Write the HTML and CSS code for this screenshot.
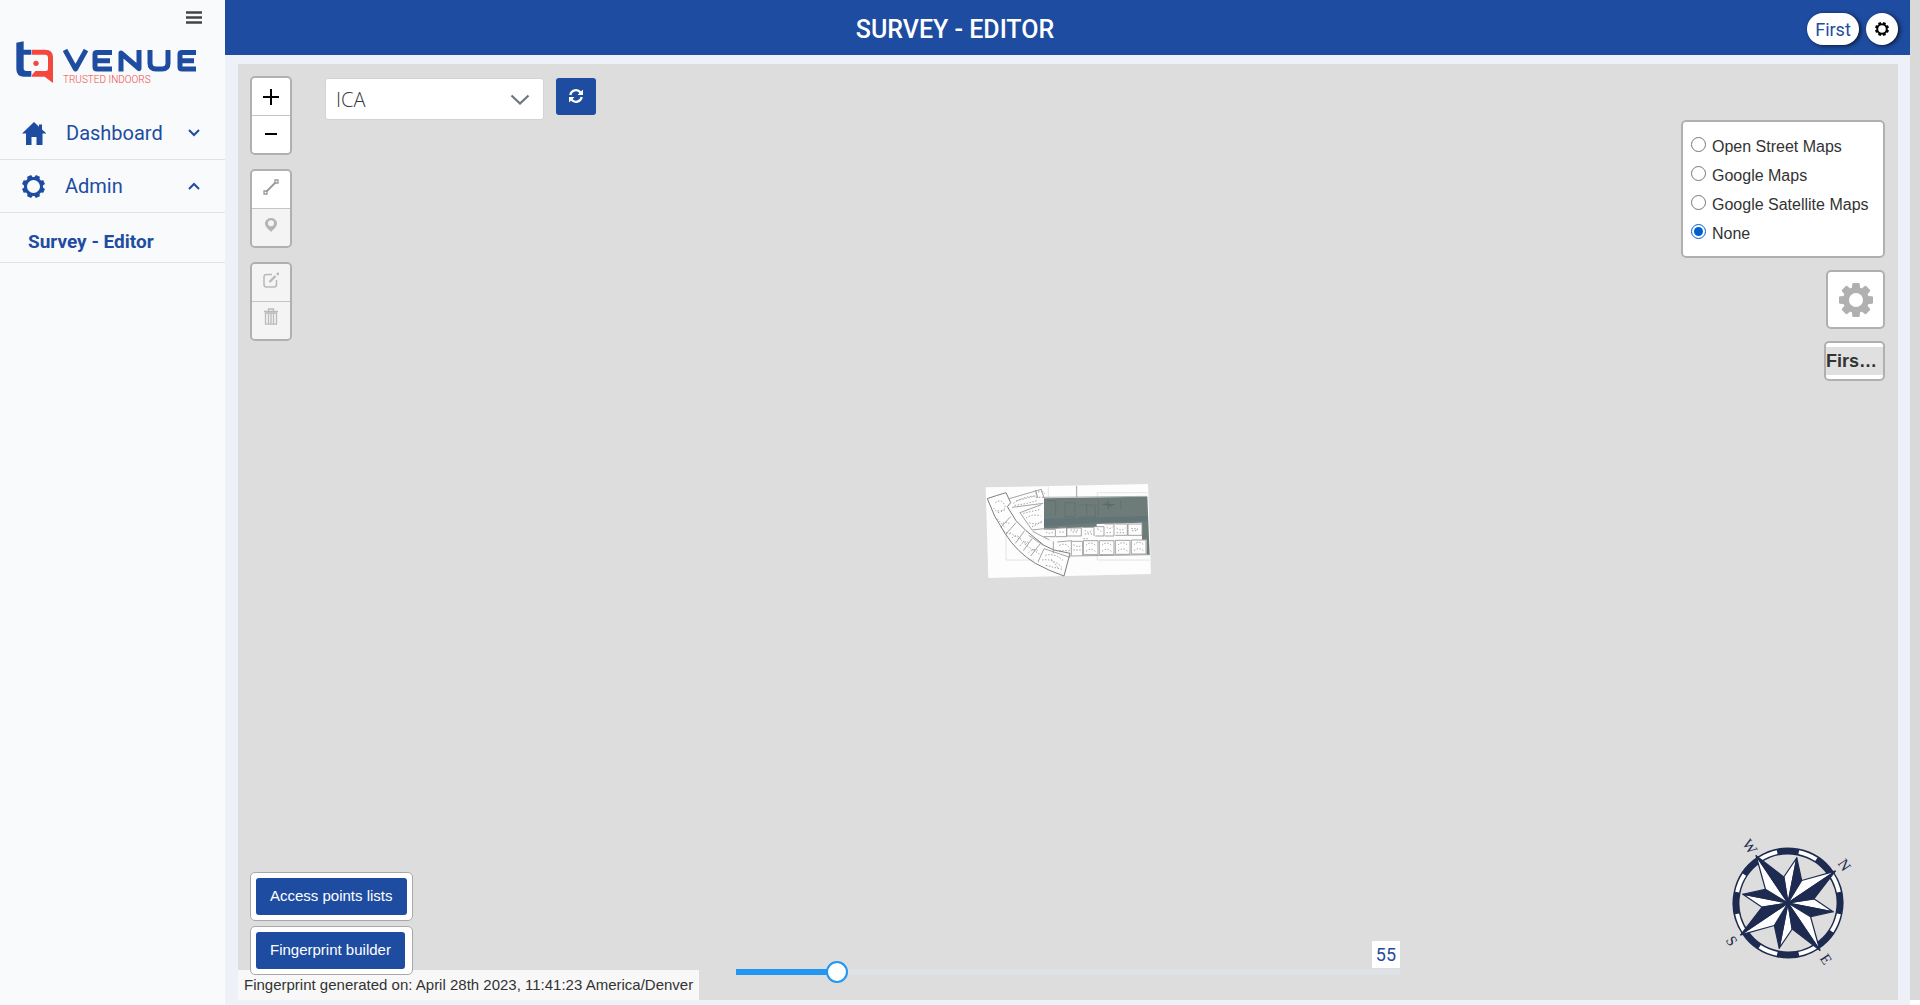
FILE: index.html
```html
<!DOCTYPE html>
<html lang="en">
<head>
<meta charset="utf-8">
<title>Survey - Editor</title>
<link rel="stylesheet" href="styles.css">
</head>
<body>
<div class="app">
  <header class="topbar">
    <h1 class="topbar-title">SURVEY - EDITOR</h1>
    <div class="topbar-actions">
      <button class="pill" type="button">First</button>
      <button class="round" type="button" aria-label="Settings">
        <svg width="14" height="14" viewBox="-12 -12 24 24"><g fill="#000"><path fill-rule="evenodd" d="M0-9a9 9 0 1 0 0 18a9 9 0 1 0 0-18zM0-6.500a6.500 6.500 0 1 1 0 13a6.500 6.500 0 1 1 0-13z"/><path id="tooth" d="M-2.200-12h4.400l1.200 4.500h-6.800z" transform="rotate(22.5)"/><use href="#tooth" transform="rotate(45)"/><use href="#tooth" transform="rotate(90)"/><use href="#tooth" transform="rotate(135)"/><use href="#tooth" transform="rotate(180)"/><use href="#tooth" transform="rotate(225)"/><use href="#tooth" transform="rotate(270)"/><use href="#tooth" transform="rotate(315)"/></g></svg>
      </button>
    </div>
  </header>

  <nav class="sidebar">
    <button class="menu-toggle" type="button" aria-label="Toggle menu">
      <svg width="16" height="14" viewBox="0 0 16 14"><path d="M0 1.5h16M0 6.5h16M0 11.5h16" stroke="#444" stroke-width="2.6"/></svg>
    </button>
    <div class="brand">
      <svg width="38" height="42" viewBox="0 0 114 126" aria-hidden="true">
        <path fill="#1e4ca1" d="M1 5L23 1V26H46V41H23V82Q23 90 31 90H46V107H24Q1 107 1 84z"/>
        <path fill="#f4483f" d="M48 26H88Q111 26 111 49V126L86 107H48V102L58 90H90Q96 90 96 84V50Q96 41 87 41H48z"/>
        <circle cx="60" cy="67" r="8" fill="#f4483f"/>
      </svg>
      <div class="brand-text">
        <svg width="134" height="24" viewBox="0 0 134 24" role="img" aria-label="VENUE"><g fill="none" stroke="#1e4ca1" stroke-width="5" stroke-linejoin="round"><path d="M2 1L12.500 20L23 1"/><path d="M49 3.500H34Q32 3.500 32 5V18Q32 20 34 20H49M32 11.800H47"/><path d="M58 22.500V4L76 19.500V1"/><path d="M87 1V14Q87 20 93 20H99Q105 20 105 14V1"/><path d="M133 3.500H119Q117 3.500 117 5V18Q117 20 119 20H133M117 11.800H131"/></g></svg>
        <span class="tagline">TRUSTED INDOORS</span>
      </div>
    </div>
    <ul class="menu">
      <li><a class="menu-item" href="#">
        <svg width="24" height="24" viewBox="0 0 24 24"><path fill="#1e4ca1" d="M12 1L0 12.500H4V24H9.500V16H14.500V24H20.500V12.500H24.500L20 8.500V3.500H17V5.700z"/></svg>
        <span>Dashboard</span>
        <svg class="caret" width="12" height="8" viewBox="0 0 12 8"><path d="M1 1l5 5 5-5" fill="none" stroke="#1e4ca1" stroke-width="2"/></svg>
      </a></li>
      <li><a class="menu-item" href="#">
        <svg width="23" height="23" viewBox="-12 -12 24 24"><g fill="#1e4ca1"><path fill-rule="evenodd" d="M0-10a10 10 0 1 0 0 20a10 10 0 1 0 0-20zM0-6.800a6.800 6.800 0 1 1 0 13.600a6.800 6.800 0 1 1 0-13.600z"/><use href="#tooth"/><use href="#tooth" transform="rotate(45)"/><use href="#tooth" transform="rotate(90)"/><use href="#tooth" transform="rotate(135)"/><use href="#tooth" transform="rotate(180)"/><use href="#tooth" transform="rotate(225)"/><use href="#tooth" transform="rotate(270)"/><use href="#tooth" transform="rotate(315)"/></g></svg>
        <span>Admin</span>
        <svg class="caret" width="12" height="8" viewBox="0 0 12 8"><path d="M1 7l5-5 5 5" fill="none" stroke="#1e4ca1" stroke-width="2"/></svg>
      </a></li>
      <li><a class="submenu-item" href="#">Survey - Editor</a></li>
    </ul>
  </nav>

  <main class="map">
    <svg class="floorplan" width="200" height="120" viewBox="-6 6 600 360" aria-hidden="true">
      <path d="M47 52L534 42L543 312L55 324z" fill="#fdfdfd"/>
      <g fill="none" stroke="#dadada" stroke-width="2"><path d="M108 190V270H195M382 80V68H532M382 256V270H540M235 50V80"/></g>
      <path d="M222 85L532 80L539 254H530V209H516V158L466 160L380 162V170L252 176H222z" fill="#6d7c79"/>
      <path d="M222 146L532 138V152L380 158L222 170z" fill="#5f7078" opacity=".7"/>
      <g fill="none" stroke="#5b6866" stroke-width="1.500"><path d="M232 92h25v45M285 98h30v42h-30zM326 105h50v36h-50M350 100v38M385 88v50M452 92v26M222 82L532 79"/><path d="M398 104h36M415 92v26M404 98l22 12" stroke-width="3"/></g>
      <g fill="none" stroke="#969696" stroke-width="2.600">
        <path d="M52 86Q80 76 108 68L122 98L112 110L138 152L168 182L222 226L252 240L300 250L282 318Q240 304 196 280Q140 246 105 190Q70 140 52 86z" stroke="#7d7d7d" stroke-width="3"/>
        <path d="M118 86L214 58M126 112L220 100M150 128L186 180L222 176M150 128L214 104M214 58L222 84M196 60L204 84M92 172L122 140M108 192L138 158M136 220L164 182M160 242L186 206M182 258L210 222M204 276L222 236L300 262M188 184l50 26M176 196l44 30"/>
        <path d="M222 178H256V200H222M266 172H290V200H258M290 174H334V198H290zM338 172H372V198M376 170H402V198H376M404 162H432V198H404M436 162H472V196H436M474 162H516V196H474z"/>
        <path d="M250 214V250M262 216L304 212V256M304 214H338V256M340 212H384V254H340zM388 212H432V254H388zM436 211H480V253H436zM484 210H528V252H484zM300 258L540 254M320 48V82"/>
      </g>
      <g fill="none" stroke="#8c8c8c" stroke-width="2.600" stroke-dasharray="4 5">
        <path d="M76 98q16-12 26 4t-10 20-20-8M84 128l24-10M130 100q30-22 70-22M134 106q34-4 66-14M140 92l56-14M160 130L212 118M168 144q20-14 44-6M178 158q20 8 38-4M186 170l30-14M82 146l24 28M98 160q14-8 22 4M100 184l20 8M120 188l22 14M126 204q14-14 26 2M144 204l30 20M150 228q10-18 28-10M164 222l30 22M176 248q14-16 28-6M190 240l18 12M226 256q30-8 54 16M216 270q30-6 60 22M228 286l48 12M244 268l20 26"/>
        <path d="M196 70q20-12 30 4M198 82h24M228 186q10 8 24-2M268 186h18M302 180h20v6h-20M344 180q10 12 22 2M344 192h22M382 176q10 8 14 10M410 172q10 8 18-2M410 188h18M440 174q14 12 26 0M440 188h26M484 176h18v6h-18M268 226q20-10 32 10M268 242h32M310 224q14 10 26 2M310 240h24M348 226q14-14 28 0M348 244q14-12 28 0M396 226q14-14 28 0M396 244q14-12 28 0M444 225q14-14 28 0M444 243q14-12 28 0M492 224q14-14 28 0M492 242q14-12 28 0M340 206h14"/>
      </g>
    </svg>

    <div class="map-top">
      <div class="tools">
        <div class="tool-group">
          <button class="tool" type="button" aria-label="Zoom in"><svg width="16" height="16" viewBox="0 0 16 16"><path d="M0 8h16M8 0v16" stroke="#000" stroke-width="2"/></svg></button>
          <button class="tool" type="button" aria-label="Zoom out"><svg width="16" height="16" viewBox="0 0 16 16"><path d="M2 7h12" stroke="#000" stroke-width="2"/></svg></button>
        </div>
        <div class="tool-group draw">
          <button class="tool" type="button" aria-label="Draw line"><svg width="16" height="16" viewBox="0 0 16 16"><g fill="none" stroke="#999"><path d="M3.500 12.500L12.500 3.500" stroke-width="1.800"/><path d="M1 12h3v3h-3zM12 1h3v3h-3z" stroke-width="1.300"/></g></svg></button>
          <button class="tool" type="button" aria-label="Draw marker" disabled><svg width="14" height="16" viewBox="0 0 14 16"><path fill="#b4b4b4" fill-rule="evenodd" d="M7 1C3.500 1 1 3.500 1 6.500C1 10 5 12.500 7 15C9 12.500 13 10 13 6.500C13 3.500 10.500 1 7 1zM7 3.200a3 3 0 1 1 0 6a3 3 0 1 1 0-6z"/></svg></button>
        </div>
        <div class="tool-group draw">
          <button class="tool" type="button" aria-label="Edit layers" disabled><svg width="16" height="16" viewBox="0 0 16 16"><g fill="none" stroke="#b9b9b9" stroke-width="1.500"><path d="M9 2.500H3.500Q1 2.500 1 5V12.500Q1 15 3.500 15H11Q13.500 15 13.500 12.500V8"/><path d="M6.500 10L12.500 4" stroke-width="2.400"/><path d="M14 1l1.800 1.800" stroke-width="2.500"/></g></svg></button>
          <button class="tool" type="button" aria-label="Delete layers" disabled><svg width="14" height="20" viewBox="0 0 14 20"><g fill="none" stroke="#b9b9b9"><path d="M0 3.500H14M4.500 3V1H9.500V3" stroke-width="1.300"/><path d="M1.500 5V16.200H12.500V5zM4.500 5.500V16M7 5.500V16M9.500 5.500V16" stroke-width="1.300"/></g></svg></button>
        </div>
      </div>
      <div class="floor-picker">
        <span class="select-wrap">
          <select class="select" aria-label="Venue"><option>ICA</option></select>
          <svg class="select-arrow" width="20" height="12" viewBox="0 0 20 12"><path d="M1.500 1.500L10 9.500L18.500 1.500" fill="none" stroke="#6c757d" stroke-width="2.200"/></svg>
        </span>
        <button class="refresh" type="button" aria-label="Refresh"><svg width="14" height="14" viewBox="0 0 14 14"><g fill="none" stroke="#fff" stroke-width="2.200"><path d="M1.300 6A5.700 5.700 0 0 1 11.500 3.500M12.700 8A5.700 5.700 0 0 1 2.500 10.500"/></g><path fill="#fff" d="M14 .5V6H8.500zM0 13.500V8H5.500z"/></svg></button>
      </div>
      <div class="map-side">
        <fieldset class="layers">
          <label><input type="radio" name="layer">Open Street Maps</label>
          <label><input type="radio" name="layer">Google Maps</label>
          <label><input type="radio" name="layer">Google Satellite Maps</label>
          <label><input type="radio" name="layer" checked>None</label>
        </fieldset>
        <button class="map-settings" type="button" aria-label="Map settings">
          <svg width="34" height="34" viewBox="-17 -17 34 34"><g fill="#b0b0b0"><path fill-rule="evenodd" d="M0-13a13 13 0 1 0 0 26a13 13 0 1 0 0-26zM0-7a7 7 0 1 1 0 14a7 7 0 1 1 0-14z"/><path id="cog" d="M-3-17h6q1 0 1 5h-8q0-5 1-5z"/><use href="#cog" transform="rotate(45)"/><use href="#cog" transform="rotate(90)"/><use href="#cog" transform="rotate(135)"/><use href="#cog" transform="rotate(180)"/><use href="#cog" transform="rotate(225)"/><use href="#cog" transform="rotate(270)"/><use href="#cog" transform="rotate(315)"/></g></svg>
        </button>
        <div class="floors"><button class="floor" type="button">Firs…</button></div>
      </div>
    </div>

    <div class="map-bottom">
      <div class="map-corner">
        <div class="action"><button class="primary" type="button">Access points lists</button></div>
        <div class="action"><button class="primary" type="button">Fingerprint builder</button></div>
        <div class="attribution">Fingerprint generated on: April 28th 2023, 11:41:23 America/Denver</div>
      </div>
      <div class="slider">
        <output class="slider-value" for="opacity">55</output>
        <input class="range" id="opacity" type="range" min="41" max="141" value="55" aria-label="Opacity">
      </div>
      <svg class="compass" width="150" height="150" viewBox="-75 -75 150 150" role="img" aria-label="Compass">
        <g transform="rotate(56)">
          <circle r="52" fill="none" stroke="#1e2b50" stroke-width="7"/>
          <circle r="52" fill="none" stroke="#fff" stroke-width="4" pathLength="360" stroke-dasharray="21 24" transform="rotate(-89)"/>
          <g stroke="#1e2b50" stroke-width="1.200" stroke-linejoin="round">
            <g id="minor" transform="rotate(45)"><path fill="#fff" d="M0-46V0L-9-25z"/><path fill="#1e2b50" d="M0-46V0L9-25z"/></g>
            <use href="#minor" transform="rotate(90)"/><use href="#minor" transform="rotate(180)"/><use href="#minor" transform="rotate(270)"/>
            <g id="major"><path fill="#fff" d="M0-57V0L-11-24z"/><path fill="#1e2b50" d="M0-57V0L11-24z"/></g>
            <use href="#major" transform="rotate(90)"/><use href="#major" transform="rotate(180)"/><use href="#major" transform="rotate(270)"/>
          </g>
          <g class="compass-letters"><text x="0" y="-63">N</text><text x="68" y="5">E</text><text x="0" y="73">S</text><text x="-68" y="5">W</text></g>
        </g>
      </svg>
    </div>
  </main>
  <div class="gutter"></div>
</div>
</body>
</html>
```
FILE: styles.css
```css
* { box-sizing: border-box; }
body { margin: 0; background: #eef1f7; font-family: Roboto, sans-serif; color: #1e4ca1; }
button { font: inherit; cursor: pointer; padding: 0; border: 0; }
svg { display: block; flex: none; }

.app { display: grid; grid-template-columns: 225px 1fr 10px; grid-template-rows: 55px 1fr; min-height: 100vh; }
.topbar { grid-area: 1 / 1 / 2 / 3; display: grid; grid-template-columns: 1fr auto 1fr; align-items: center; padding: 0 12px; background: #1e4ca1; }
.topbar-title { grid-column: 2; margin: 0; padding-top: 5px; color: #fff; font-size: 25px; line-height: 32px; font-weight: 500; }
.topbar-actions { display: flex; justify-content: flex-end; gap: 7px; padding-top: 3px; }
.pill, .round { height: 32px; border-radius: 16px; background: #fff; box-shadow: 2px 1px 4px #000a; }
.pill { width: 52px; color: #1e4ca1; font-size: 18px; }
.round { display: grid; place-items: center; width: 32px; }

.sidebar { grid-area: 1 / 1 / 3 / 2; display: flex; flex-direction: column; background: #f8fafc; }
.menu-toggle { align-self: flex-end; margin: 11px 23px 0 0; background: none; }
.brand { display: flex; gap: 9px; padding: 16px 16px 0; }
.brand-text { padding-top: 8px; }
.tagline { display: block; color: #f4483f; font: 300 10px/14px Roboto, sans-serif; }
.menu { list-style: none; margin: 20px 0 0; padding: 0; }
.menu li { border-bottom: 1px solid #dfe1e5; }
.menu-item { display: flex; align-items: center; gap: 20px; height: 52px; padding: 0 25px 0 22px; color: #1e4ca1; font-size: 20px; text-decoration: none; }
.caret { margin-left: auto; }
.submenu-item { display: block; padding: 9px 28px 0; height: 49px; color: #1e4ca1; font-size: 19px; line-height: 40px; font-weight: 700; text-decoration: none; }
.gutter { grid-area: 1 / 3 / 3 / 4; border-bottom: 5px solid #fff; background: #d9d9d9; }

.map { position: relative; grid-area: 2 / 2; display: flex; flex-direction: column; justify-content: space-between; margin: 9px 12px 5px 13px; background: #ddd; }
.floorplan { position: absolute; left: 50%; top: 50%; transform: translate(-50%, -50%); }
.map-top { position: relative; display: flex; padding: 12px 13px 0 12px; }
.tools { display: flex; flex-direction: column; gap: 14px; }
.tool-group { width: 42px; border: 2px solid #b0b0b0; border-radius: 5px; overflow: hidden; }
.tool { display: grid; place-items: center; width: 100%; height: 37px; background: #fff; }
.tool + .tool { height: 38px; border-top: 1px solid #c4c4c4; }
.tool:disabled { background: #f4f4f4; }
.draw .tool { padding-bottom: 5px; }
.floor-picker { display: flex; align-items: flex-start; gap: 12px; padding: 2px 0 0 33px; }
.select-wrap { position: relative; display: flex; }
.select { appearance: none; width: 219px; height: 42px; padding: 0 10px; border: 1px solid #ced4da; border-radius: 3px; background: #fff; color: #343a40; font: 300 20px "Open Sans", sans-serif; }
.select-arrow { position: absolute; right: 14px; top: 16px; pointer-events: none; }
.refresh { display: grid; place-items: center; width: 40px; height: 37px; padding-bottom: 2px; border-radius: 3px; background: #1e4ca1; }

.map-side { display: flex; flex-direction: column; align-items: flex-end; gap: 12px; margin-left: auto; padding-top: 44px; font-family: "Liberation Sans", Arial, sans-serif; }
.layers { width: 204px; margin: 0; padding: 10px 8px 8px; border: 2px solid #b0b0b0; border-radius: 5px; background: #fff; color: #333; font-size: 16px; line-height: 29px; }
.layers label { display: flex; gap: 6px; white-space: nowrap; }
.layers input { flex: none; width: 15px; height: 15px; margin: 5px 0 0; accent-color: #0060d0; }
.map-settings { display: grid; place-items: center; width: 59px; height: 59px; border: 2px solid #b0b0b0; border-radius: 5px; background: #fff; }
.floors { width: 61px; padding: 4px 0; border: 2px solid #b0b0b0; border-radius: 5px; background: #fff; }
.floor { display: block; width: 100%; background: #e0e0e0; color: #333; font-size: 18px; line-height: 28px; font-weight: 700; text-align: left; }

.map-bottom { position: relative; display: grid; grid-template-columns: 461px 1fr 150px; align-items: end; }
.map-corner { display: flex; flex-direction: column; align-items: flex-start; font-family: "Liberation Sans", Arial, sans-serif; }
.action { position: relative; width: 163px; margin: 0 0 5px 12px; padding: 5px; border: 1px solid #a8a8a8; border-radius: 5px; background: #fff; }
.primary { height: 37px; padding: 0 14px 2px; border-radius: 3px; background: #1e4ca1; color: #fff; font-size: 15px; }
.attribution { align-self: stretch; margin-top: -10px; padding: 0 6px; background: #f8f8f8; color: #333; font-size: 15px; line-height: 30px; white-space: nowrap; }
.slider { display: flex; flex-direction: column; align-items: flex-end; width: 664px; margin: 0 0 17px 37px; }
.slider-value { padding: 0 4px; background: #fff; font-size: 18px; line-height: 27px; }
.range { appearance: none; width: 100%; height: 22px; margin: -7px 0 0; background: linear-gradient(to right, #2196f3 100px, #dee2e6 100px) center / 100% 6px no-repeat; }
.range::-webkit-slider-thumb { appearance: none; width: 22px; height: 22px; border: 2px solid #2196f3; border-radius: 50%; background: #fff; }
.compass { position: relative; right: 35px; margin-bottom: 22px; }
.compass-letters { fill: #1e2b50; font: 15px "Liberation Serif", serif; text-anchor: middle; }
```
